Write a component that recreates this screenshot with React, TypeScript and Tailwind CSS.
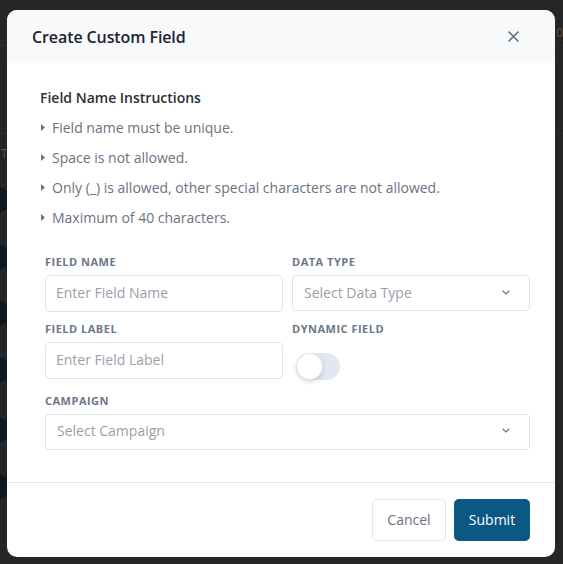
import React from "react";

const Label = ({ children }: { children: React.ReactNode }) => (
  <div className="text-[11px] leading-[16px] font-bold tracking-[0.5px] text-[#6b7789] uppercase">
    {children}
  </div>
);

const Chevron = () => (
  <svg width="8" height="5" viewBox="0 0 8 5" className="text-[#6b7280]">
    <path d="M1 1l3 3 3-3" fill="none" stroke="currentColor" strokeWidth="1.1" strokeLinecap="round" strokeLinejoin="round" />
  </svg>
);

const Bullet = ({ children }: { children: React.ReactNode }) => (
  <div className="flex items-center h-[20px] text-[14px] text-[#6b7280]">
    <svg width="4" height="7" viewBox="0 0 4 7" className="ml-[1px] mr-[7px]">
      <path d="M0 0l4 3.5L0 7z" fill="#6b7280" />
    </svg>
    <span>{children}</span>
  </div>
);

export default function App() {
  const circles = [200, 257, 313, 370, 430, 487];
  return (
    <div
      className="relative w-[563px] h-[564px] bg-[#262626] overflow-hidden"
      style={{ fontFamily: '"Open Sans", "Noto Sans", sans-serif' }}
    >
      {/* background content behind overlay */}
      <div className="absolute left-0 right-0 top-[45px] h-px bg-[#2e2e2e]" />
      <div className="absolute left-0 right-0 top-[133px] h-px bg-[#2e2e2e]" />
      <div className="absolute left-[1px] top-[145px] text-[12px] text-[#555]">T</div>
      <div className="absolute right-[0px] top-[24px] text-[12px] text-[#555]">0</div>
      {circles.map((y) => (
        <div
          key={y}
          className="absolute left-[-16px] w-[26px] h-[26px] rounded-full bg-[#0c1822]"
          style={{ top: y - 13 }}
        />
      ))}

      <div className="relative ml-[7px] pt-[10px]">
        <div className="w-[548px] h-[547px] bg-white rounded-[10px] overflow-hidden flex flex-col">
          {/* header */}
          <div className="h-[53px] bg-[#f8f9fb] flex items-center justify-between pl-[25px] pr-[36px]">
            <div className="text-[16px] font-semibold text-[#1c2331] tracking-[-0.1px]">Create Custom Field</div>
            <svg width="11" height="11" viewBox="0 0 11 11">
              <path d="M1 1l9 9M10 1l-9 9" stroke="#5b6f8a" strokeWidth="1.6" strokeLinecap="round" />
            </svg>
          </div>

          {/* body */}
          <div className="pl-[33px] pt-[25px]">
            <div className="text-[14px] leading-[20px] font-semibold text-[#2b2f36]">Field Name Instructions</div>
            <div className="mt-[9px] flex flex-col gap-[10px]">
              <Bullet>Field name must be unique.</Bullet>
              <Bullet>Space is not allowed.</Bullet>
              <Bullet>Only (_) is allowed, other special characters are not allowed.</Bullet>
              <Bullet>Maximum of 40 characters.</Bullet>
            </div>
          </div>

          <div className="pl-[38px] pr-[25px] mt-[27px]">
            <div className="grid grid-cols-2 gap-x-[9px]">
              <div>
                <Label>Field Name</Label>
                <div className="mt-[5px] h-[37px] border border-[#dfe2e8] rounded-[5px] flex items-center px-[10px] pb-[3px] text-[14px] text-[#9aa0aa]">
                  Enter Field Name
                </div>
              </div>
              <div>
                <Label>Data Type</Label>
                <div className="mt-[5px] h-[36px] border border-[#dfe2e8] rounded-[4px] flex items-center justify-between pl-[11px] pr-[19px] pb-[1px] text-[14px] text-[#9aa0aa]">
                  <span>Select Data Type</span>
                  <Chevron />
                </div>
              </div>
              <div className="mt-[9px]">
                <Label>Field Label</Label>
                <div className="mt-[5px] h-[37px] border border-[#dfe2e8] rounded-[5px] flex items-center px-[10px] pb-[3px] text-[14px] text-[#9aa0aa]">
                  Enter Field Label
                </div>
              </div>
              <div className="mt-[9px]">
                <Label>Dynamic Field</Label>
                <div className="mt-[16px] ml-[4px] w-[44px] h-[27px] rounded-full bg-[#e4e7f1] relative">
                  <div className="absolute left-0 top-0 w-[27px] h-[27px] rounded-full bg-white border border-[#e4e7f1] shadow-[0_2px_4px_rgba(0,0,0,0.15)]" />
                </div>
              </div>
            </div>

            <div className="mt-[13px]">
              <Label>Campaign</Label>
              <div className="mt-[5px] h-[36px] border border-[#dfe2e8] rounded-[4px] flex items-center justify-between pl-[11px] pr-[19px] pb-[3px] text-[14px] text-[#9aa0aa]">
                <span>Select Campaign</span>
                <Chevron />
              </div>
            </div>
          </div>

          <div className="mt-[32px] h-px bg-[#e6e8ef]" />

          <div className="flex justify-end gap-[8px] pr-[25px] pt-[16px]">
            <button className="w-[74px] h-[42px] rounded-[5px] border border-[#e3e6ec] bg-white text-[14px] text-[#6b7280] pb-[2px]">
              Cancel
            </button>
            <button className="w-[76px] h-[42px] rounded-[5px] bg-[#0b5884] text-[14px] text-white pb-[2px]">
              Submit
            </button>
          </div>
        </div>
      </div>
    </div>
  );
}
